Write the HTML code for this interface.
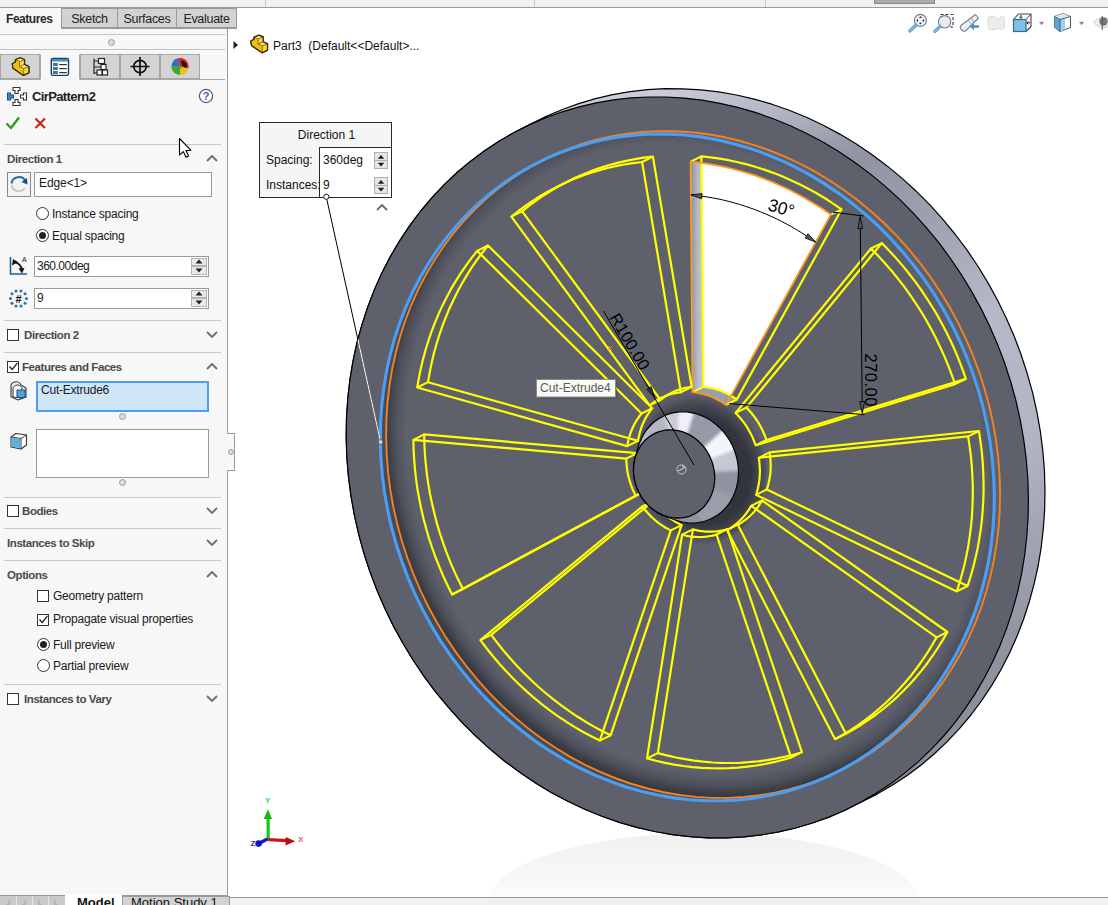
<!DOCTYPE html>
<html><head><meta charset="utf-8"><title>CirPattern2</title><style>
html,body{margin:0;padding:0;}
body{width:1108px;height:905px;overflow:hidden;background:#fff;position:relative;font-family:"Liberation Sans",sans-serif;font-size:12px;color:#1e1e1e;}
.abs{position:absolute;}
#topstrip{left:0;top:0;width:1108px;height:7px;background:#f0f0f0;border-bottom:1px solid #9a9a9a;}
#panel{left:0;top:8px;width:227px;height:887px;background:#f7f7f7;border-right:1px solid #9c9c9c;}
.tab{top:8px;height:20px;border:1px solid #9a9a9a;background:#d2d2d2;box-sizing:border-box;text-align:center;line-height:20px;font-size:12.5px;color:#222;letter-spacing:-0.3px;}
.tab.act{background:#f7f7f7;border-color:#f7f7f7;border-right-color:#9a9a9a;font-weight:bold;font-size:12px;letter-spacing:-0.45px;color:#2a2a2a;text-align:left;padding-left:5px;}
.hl{height:1px;background:#c9c9c9;left:4px;width:217px;}
.hl2{height:1px;background:#c4c4c4;left:0;width:225px;}
.itab{top:54px;height:25px;width:40px;box-sizing:border-box;border:1px solid #a8a8a8;background:#d4d4d4;}
.itab.act{background:#f7f7f7;border-color:#f7f7f7;border-left-color:#a8a8a8;border-right-color:#a8a8a8;height:26px;}
.sec{margin-top:1px;font-weight:bold;color:#4a4a4a;font-size:11.5px;letter-spacing:-0.42px;white-space:nowrap;}
.lbl{font-size:12px;color:#1a1a1a;white-space:nowrap;letter-spacing:-0.22px;}
.inp{background:#fff;border:1px solid #9a9a9a;box-sizing:border-box;}
.cb{width:12px;height:12px;margin-top:0.5px;box-sizing:border-box;border:1px solid #333;background:#fff;}
.rd{width:13px;height:13px;box-sizing:border-box;border:1px solid #333;background:#fff;border-radius:50%;}
.rd.on::after{content:"";position:absolute;left:2px;top:2px;width:7px;height:7px;border-radius:50%;background:#222;}
.hd{width:5px;height:5px;border:1px solid #9a9a9a;border-radius:50%;background:#dcdcdc;}
.spin{width:16px;border:1px solid #b5b5b5;background:#e9e9e9;box-sizing:border-box;}
</style></head><body>
<div id="topstrip" class="abs"></div>
<div class="abs" style="left:265px;top:0;width:1px;height:7px;background:#c8c8c8"></div>
<div class="abs" style="left:534px;top:0;width:1px;height:7px;background:#c8c8c8"></div>
<div class="abs" style="left:765px;top:0;width:1px;height:7px;background:#c8c8c8"></div>
<div class="abs" style="left:874px;top:0;width:61px;height:4px;background:#a9a9a9;border:1px solid #8a8a8a;border-top:none;box-sizing:border-box"></div>
<div id="panel" class="abs"></div>
<div class="abs tab act" style="left:0px;width:62px">Features</div>
<div class="abs tab" style="left:61px;width:57px">Sketch</div>
<div class="abs tab" style="left:117px;width:60px">Surfaces</div>
<div class="abs tab" style="left:176px;width:61px">Evaluate</div>
<div class="abs" style="left:61px;top:28px;width:176px;height:1px;background:#9a9a9a"></div>
<div class="abs hl2" style="top:34px"></div>
<div class="abs hd" style="left:108px;top:39px"></div>
<div class="abs hl2" style="top:49px"></div>
<div class="abs itab" style="left:0px"></div>
<div class="abs itab act" style="left:40px"></div>
<div class="abs itab" style="left:80px"></div>
<div class="abs itab" style="left:120px"></div>
<div class="abs itab" style="left:160px"></div>
<div class="abs" style="left:0;top:79px;width:40px;height:1px;background:#a8a8a8"></div>
<div class="abs" style="left:80px;top:79px;width:145px;height:1px;background:#a8a8a8"></div>
<svg class="abs" style="left:0;top:54px" width="228" height="26">
<!-- part icon -->
<g stroke-linejoin="round"><path d="M12.3,9.7 L15.5,7.9 L15.5,5.7 L20.2,3.8 L24.5,5.5 L24.5,10.4 L28.9,12.5 L28.9,18.7 L23.5,21.4 L12.9,14.1Z" fill="#f4c826" stroke="#3a2c05" stroke-width="1.3"/><path d="M15.5,5.7 L20.2,3.8 L24.5,5.5 L19.5,7.6Z" fill="#fde77a"/><path d="M19.5,7.6 L24.5,5.5 L24.5,10.4 L19.5,12.6Z" fill="#f9d848"/><path d="M24.5,10.4 L28.9,12.5 L23.8,14.4 L19.5,12.6Z" fill="#fde56e"/><path d="M23.8,14.4 L28.9,12.5 L28.9,18.7 L23.5,21.4Z" fill="#f8d440"/><path d="M12.3,9.7 L15.5,7.9 L19.5,10 L19.5,12.6 L23.8,14.4 L23.5,21.4 L12.9,14.1Z" fill="#f0be1c"/><path d="M15.5,5.7 L19.5,7.6 L24.5,5.5 M19.5,7.6 L19.5,12.6 L23.8,14.4 L28.9,12.5 M23.8,14.4 L23.5,21.4 M19.5,12.6 L24.5,10.4 M15.5,7.9 L15.5,5.7" fill="none" stroke="#7a5c08" stroke-width="0.8"/><path d="M12.3,9.7 L15.5,7.9 L15.5,5.7 L20.2,3.8 L24.5,5.5 L24.5,10.4 L28.9,12.5 L28.9,18.7 L23.5,21.4 L12.9,14.1Z" fill="none" stroke="#3a2c05" stroke-width="1.2"/></g>
<!-- property manager -->
<g><rect x="51.3" y="4.4" width="17.2" height="17" rx="1.6" fill="#fff" stroke="#1f3e5a" stroke-width="1.4"/><path d="M52,7.4 v-1.4 a1,1 0 0 1 1,-1 h13.8 a1,1 0 0 1 1,1 v1.4z" fill="#3f8fc4"/><rect x="53.3" y="9.4" width="4" height="2.3" fill="#2f7fb5" stroke="#1f4f7a" stroke-width="0.6"/><rect x="59.2" y="10" width="7.6" height="1.2" fill="#333"/><rect x="53.3" y="13.4" width="4" height="2.3" fill="#2f7fb5" stroke="#1f4f7a" stroke-width="0.6"/><rect x="59.2" y="14" width="7.6" height="1.2" fill="#333"/><rect x="53.3" y="17.4" width="4" height="2.3" fill="#2f7fb5" stroke="#1f4f7a" stroke-width="0.6"/><rect x="59.2" y="18" width="7.6" height="1.2" fill="#333"/></g>
<!-- config manager -->
<g transform="translate(92,3)" fill="#fff" stroke="#222" stroke-width="1.2"><path d="M2,1.5 L2,17 M2,4 L7,4 M2,10 L9,10 M2,16 L5,16" fill="none"/><rect x="6.5" y="1.5" width="6" height="5"/><rect x="9" y="7.5" width="5" height="5"/><rect x="5" y="13" width="5" height="5"/><rect x="10.5" y="13" width="5" height="5"/></g>
<!-- crosshair -->
<g transform="translate(140,12.5)" fill="none" stroke="#111" stroke-width="1.7"><circle r="6.2"/><path d="M-9.5,0 L9.5,0 M0,-9.5 L0,9.5"/></g>
<!-- appearance ball -->
<g transform="translate(180,12.5)"><circle r="8.5" fill="#e8b010"/><path d="M0,0 L-8.5,0 A8.5,8.5 0 0 1 -2,-8.3Z" fill="#2c6fd0"/><path d="M0,0 L-8.5,0 A8.5,8.5 0 0 0 0,8.5 L3,3Z" fill="#3aa935"/><path d="M0,0 L-2,-8.3 A8.5,8.5 0 0 1 8.4,1.5Z" fill="#d8232a"/><path d="M1,-6 A6,6 0 0 1 7,1 A5,7 0 0 1 1,-6Z" fill="#1a1a1a"/><path d="M0,8.5 A8.5,8.5 0 0 0 8.4,1.5 L0,2Z" fill="#f0c020"/></g>
</svg>
<svg class="abs" style="left:6px;top:86px" width="24" height="22"><g fill="#fff" stroke="#333" stroke-width="1.1"><path d="M7,1.5 h7 v3 h-2 v3 h-3 v-3 h-2z"/><path d="M7,19.5 h7 v-3 h-2 v-3 h-3 v3 h-2z"/><path d="M20.5,7 v7 h-3 v-2 h-3 v-3 h3 v-2z"/><path d="M1.5,7 v7 h3 v-2 h3 v-3 h-3 v-2z" fill="#3b8fd0" stroke="#1f4f7a"/></g></svg>
<div class="abs" style="left:32px;top:89px;font-weight:bold;font-size:13px;color:#222;letter-spacing:-0.62px;white-space:nowrap">CirPattern2</div>
<svg class="abs" style="left:198px;top:88px" width="16" height="16"><circle cx="8" cy="8" r="6.6" fill="#fff" stroke="#555b66" stroke-width="1.2"/><text x="8" y="12" text-anchor="middle" font-family="Liberation Sans,sans-serif" font-weight="bold" font-size="11" fill="#2f68a8">?</text></svg>
<svg class="abs" style="left:4px;top:114px" width="48" height="18"><path d="M2.5,9.5 L7,14 L15,3.5" fill="none" stroke="#2e9b1f" stroke-width="2.4"/><path d="M31.5,4.5 L41,14 M41,4.5 L31.5,14" fill="none" stroke="#c8280f" stroke-width="2.2"/></svg>
<div class="abs hl" style="top:144px"></div>
<div class="abs sec" style="left:7px;top:152px">Direction 1</div>
<svg class="abs" style="left:0;top:0" width="228" height="905"><path d="M207,161 l5,-5 l5,5" fill="none" stroke="#6e6e6e" stroke-width="1.8"/></svg>
<div class="abs inp" style="left:7px;top:172px;width:24px;height:25px;background:#f4f4f4;border-color:#8a8a8a"></div>
<svg class="abs" style="left:8px;top:173px" width="22" height="23"><path d="M3.5,12 A7.5,7.5 0 0 0 17,15" fill="none" stroke="#c9c9c9" stroke-width="2"/><path d="M3.5,10.5 A7.5,7.5 0 0 1 17.5,8" fill="none" stroke="#2c6f9e" stroke-width="2"/><path d="M19.5,11.5 L13.5,9 L19,5Z" fill="#1f4f7a"/></svg>
<div class="abs inp" style="left:34px;top:172px;width:178px;height:25px"></div>
<div class="abs lbl" style="left:39px;top:176px;letter-spacing:-0.1px">Edge&lt;1&gt;</div>
<div class="abs rd" style="left:36px;top:207px"></div>
<div class="abs lbl" style="left:52px;top:207px">Instance spacing</div>
<div class="abs rd on" style="left:36px;top:229px"></div>
<div class="abs lbl" style="left:52px;top:229px">Equal spacing</div>
<svg class="abs" style="left:8px;top:255px" width="22" height="22"><path d="M2.5,2 L2.5,19 L19,19" fill="none" stroke="#1f5f95" stroke-width="1.6"/><path d="M6,7 A9,9 0 0 1 14,15" fill="none" stroke="#111" stroke-width="1.8"/><path d="M4,10.5 L5,4 L10,7Z M16.5,13 L14,18.5 L10.5,13.5Z" fill="#111"/><text x="14" y="7" font-size="7" font-family="Liberation Sans,sans-serif" fill="#111">A</text></svg>
<div class="abs inp" style="left:34px;top:256px;width:175px;height:21px"></div>
<div class="abs lbl" style="left:37px;top:259px;letter-spacing:-0.5px">360.00deg</div>
<div class="abs spin" style="left:191px;top:258px;height:8px"></div><div class="abs spin" style="left:191px;top:266px;height:9px"></div><svg class="abs" style="left:191px;top:258px" width="16" height="17"><path d="M4.5,5.5 l3.5,-4 l3.5,4z M4.5,10.5 l3.5,4 l3.5,-4z" fill="#222"/></svg>
<svg class="abs" style="left:8px;top:288px" width="22" height="22"><g fill="#2a72a8"><circle cx="18.5" cy="10.5" r="1.5"/><circle cx="17.0" cy="15.2" r="1.5"/><circle cx="13.0" cy="18.1" r="1.5"/><circle cx="8.0" cy="18.1" r="1.5"/><circle cx="4.0" cy="15.2" r="1.5"/><circle cx="2.5" cy="10.5" r="1.5"/><circle cx="4.0" cy="5.8" r="1.5"/><circle cx="8.0" cy="2.9" r="1.5"/><circle cx="13.0" cy="2.9" r="1.5"/><circle cx="17.0" cy="5.8" r="1.5"/></g><text x="10.5" y="14.5" text-anchor="middle" font-size="11" font-weight="bold" font-family="Liberation Sans,sans-serif" fill="#111">#</text></svg>
<div class="abs inp" style="left:34px;top:288px;width:175px;height:21px"></div>
<div class="abs lbl" style="left:37px;top:291px">9</div>
<div class="abs spin" style="left:191px;top:290px;height:8px"></div><div class="abs spin" style="left:191px;top:298px;height:9px"></div><svg class="abs" style="left:191px;top:290px" width="16" height="17"><path d="M4.5,5.5 l3.5,-4 l3.5,4z M4.5,10.5 l3.5,4 l3.5,-4z" fill="#222"/></svg>
<div class="abs hl" style="top:320px"></div>
<div class="abs cb" style="left:7px;top:328px"></div>
<div class="abs sec" style="left:24px;top:328px">Direction 2</div>
<svg class="abs" style="left:0;top:0" width="228" height="905"><path d="M207,332 l5,5 l5,-5" fill="none" stroke="#6e6e6e" stroke-width="1.8"/></svg>
<div class="abs hl" style="top:352px"></div>
<div class="abs cb" style="left:7px;top:360px"></div><svg class="abs" style="left:7px;top:360px" width="13" height="13"><path d="M2.5,6.5 L5.2,9.5 L10.5,2.8" fill="none" stroke="#222" stroke-width="1.3"/></svg>
<div class="abs sec" style="left:22px;top:360px">Features and Faces</div>
<svg class="abs" style="left:0;top:0" width="228" height="905"><path d="M207,369 l5,-5 l5,5" fill="none" stroke="#6e6e6e" stroke-width="1.8"/></svg>
<svg class="abs" style="left:9px;top:381px" width="20" height="20"><path d="M2,6 A5,4 0 0 1 12,4 L17,7 L17,16 L9,19 L2,16Z" fill="#e8eef5" stroke="#333" stroke-width="1.1"/><path d="M4,8 A4.5,4 0 0 1 13,8 L13,17 L4,16Z" fill="#fff" stroke="#333" stroke-width="1"/><rect x="8" y="9" width="8" height="7.5" fill="#4aa3dc" stroke="#1f4f7a" stroke-width="1"/></svg>
<div class="abs" style="left:36px;top:381px;width:173px;height:31px;box-sizing:border-box;background:#cfe5f8;border:2px solid #4aa0ee"></div>
<div class="abs lbl" style="left:41px;top:383px">Cut-Extrude6</div>
<div class="abs hd" style="left:119px;top:413px"></div>
<svg class="abs" style="left:9px;top:431px" width="20" height="20"><path d="M2,6 L7,2.5 L17.5,4 L17.5,14 L12,18 L2,16Z" fill="#fff" stroke="#333" stroke-width="1.1" stroke-linejoin="round"/><path d="M2,6 L12,7.5 L12,18 M12,7.5 L17.5,4" fill="none" stroke="#333" stroke-width="1"/><path d="M2.6,6.6 L11.4,8 L11.4,17.2 L2.6,15.5Z" fill="#5ab0e0"/></svg>
<div class="abs inp" style="left:36px;top:429px;width:173px;height:49px"></div>
<div class="abs hd" style="left:119px;top:479px"></div>
<div class="abs hl" style="top:497px"></div>
<div class="abs cb" style="left:7px;top:504px"></div>
<div class="abs sec" style="left:22px;top:504px">Bodies</div>
<svg class="abs" style="left:0;top:0" width="228" height="905"><path d="M207,508 l5,5 l5,-5" fill="none" stroke="#6e6e6e" stroke-width="1.8"/></svg>
<div class="abs hl" style="top:528px"></div>
<div class="abs sec" style="left:7px;top:536px">Instances to Skip</div>
<svg class="abs" style="left:0;top:0" width="228" height="905"><path d="M207,540 l5,5 l5,-5" fill="none" stroke="#6e6e6e" stroke-width="1.8"/></svg>
<div class="abs hl" style="top:560px"></div>
<div class="abs sec" style="left:7px;top:568px">Options</div>
<svg class="abs" style="left:0;top:0" width="228" height="905"><path d="M207,577 l5,-5 l5,5" fill="none" stroke="#6e6e6e" stroke-width="1.8"/></svg>
<div class="abs cb" style="left:37px;top:589px"></div>
<div class="abs lbl" style="left:53px;top:589px">Geometry pattern</div>
<div class="abs cb" style="left:37px;top:613px"></div><svg class="abs" style="left:37px;top:613px" width="13" height="13"><path d="M2.5,6.5 L5.2,9.5 L10.5,2.8" fill="none" stroke="#222" stroke-width="1.3"/></svg>
<div class="abs lbl" style="left:53px;top:612px">Propagate visual properties</div>
<div class="abs rd on" style="left:37px;top:638px"></div>
<div class="abs lbl" style="left:53px;top:638px">Full preview</div>
<div class="abs rd" style="left:37px;top:659px"></div>
<div class="abs lbl" style="left:53px;top:659px">Partial preview</div>
<div class="abs hl" style="top:684px"></div>
<div class="abs cb" style="left:7px;top:692px"></div>
<div class="abs sec" style="left:24px;top:692px">Instances to Vary</div>
<svg class="abs" style="left:0;top:0" width="228" height="905"><path d="M207,696 l5,5 l5,-5" fill="none" stroke="#6e6e6e" stroke-width="1.8"/></svg>
<div class="abs" style="left:227px;top:433px;width:8px;height:38px;box-sizing:border-box;background:#f7f7f7;border:1px solid #9c9c9c;border-left:none"></div>
<div class="abs hd" style="left:228px;top:449px;width:4px;height:4px"></div>
<div class="abs" style="left:0;top:895px;width:228px;height:10px;background:#f0f0f0;border-top:1px solid #9a9a9a;box-sizing:border-box"></div>
<div class="abs" style="left:228px;top:897px;width:880px;height:8px;background:#f0f0f0;border-top:1px solid #9a9a9a;box-sizing:border-box"></div>
<div class="abs" style="left:0;top:896px;width:65px;height:9px;background:#c9c9c9"></div>
<div class="abs" style="left:16px;top:896px;width:1px;height:9px;background:#e6e6e6"></div>
<div class="abs" style="left:32px;top:896px;width:1px;height:9px;background:#e6e6e6"></div>
<div class="abs" style="left:48px;top:896px;width:1px;height:9px;background:#e6e6e6"></div>
<svg class="abs" style="left:0;top:896px" width="66" height="9"><path d="M10,3 l-4,6 h4z M26,3 l-4,6 h4z M38,3 l4,6 h-4z M54,3 l4,6 h-4z" fill="#b4b4b4"/></svg>
<div class="abs" style="left:65px;top:894px;width:57px;height:11px;background:#fff;overflow:hidden"><div style="position:absolute;left:12px;top:1px;font-weight:bold;font-size:13px;color:#111;white-space:nowrap">Model</div></div>
<div class="abs" style="left:122px;top:896px;width:108px;height:9px;background:#d2d2d2;border:1px solid #9a9a9a;border-bottom:none;box-sizing:border-box;overflow:hidden"><div style="position:absolute;left:8px;top:-2px;font-size:13px;color:#111;white-space:nowrap">Motion Study 1</div></div>
<svg class="abs" style="left:0;top:0" width="1108" height="905" viewBox="0 0 1108 905" font-family="Liberation Sans, sans-serif">
<clipPath id="vp"><rect x="228" y="8" width="880" height="889"/></clipPath>
<g clip-path="url(#vp)">
<defs>
<linearGradient id="rim" gradientUnits="userSpaceOnUse" x1="650" y1="92" x2="942" y2="782"><stop offset="0" stop-color="#c9ccd9"/><stop offset="0.09" stop-color="#b3b6c5"/><stop offset="0.185" stop-color="#9093a1"/><stop offset="0.3" stop-color="#9da0ae"/><stop offset="0.44" stop-color="#b5b8c8"/><stop offset="0.62" stop-color="#b2b5c4"/><stop offset="0.76" stop-color="#9fa2b0"/><stop offset="0.88" stop-color="#8f929f"/><stop offset="1" stop-color="#868996"/></linearGradient>
<linearGradient id="wallL" gradientUnits="userSpaceOnUse" x1="691" y1="0" x2="704" y2="0"><stop offset="0" stop-color="#8e919e"/><stop offset="0.5" stop-color="#b6b8c6"/><stop offset="1" stop-color="#c9cbd6"/></linearGradient>
<linearGradient id="floorsh" x1="0" y1="0" x2="0" y2="1"><stop offset="0" stop-color="#f0f0f0"/><stop offset="0.25" stop-color="#f6f6f6"/><stop offset="0.5" stop-color="#fdfdfd"/><stop offset="1" stop-color="#ffffff"/></linearGradient>
<radialGradient id="hubsh" gradientUnits="userSpaceOnUse" cx="0" cy="0" r="1" gradientTransform="matrix(73.34 6.49 -0.65 -79.40 700.64 469.62)"><stop offset="0" stop-color="#2f313a"/><stop offset="0.68" stop-color="#33353e"/><stop offset="0.85" stop-color="#4a4c57"/><stop offset="1" stop-color="#5e616c" stop-opacity="0"/></radialGradient>
<radialGradient id="recsh" gradientUnits="userSpaceOnUse" cx="0" cy="0" r="1" gradientTransform="matrix(316.20 28.00 -2.82 -342.34 696.10 458.52)"><stop offset="0.917" stop-color="#2c2e36" stop-opacity="0"/><stop offset="0.951" stop-color="#2c2e36" stop-opacity="0.3"/><stop offset="0.971" stop-color="#2c2e36" stop-opacity="0.62"/><stop offset="0.99" stop-color="#2c2e36" stop-opacity="0.85"/></radialGradient>
<linearGradient id="chrome" gradientUnits="userSpaceOnUse" x1="650" y1="410" x2="735" y2="525"><stop offset="0" stop-color="#9c9fae"/><stop offset="0.18" stop-color="#e8e9f0"/><stop offset="0.3" stop-color="#8a8d9b"/><stop offset="0.5" stop-color="#7b7e8c"/><stop offset="0.62" stop-color="#dfe0ea"/><stop offset="0.72" stop-color="#a5a8b6"/><stop offset="1" stop-color="#7d808e"/></linearGradient>
<clipPath id="seedclip"><path d="M726.0,404.9 L724.1,403.5 L722.1,402.3 L720.1,401.1 L718.1,400.0 L716.1,398.9 L714.0,397.9 L711.9,397.0 L709.8,396.2 L707.7,395.4 L705.5,394.8 L703.4,394.1 L701.2,393.6 L699.0,393.1 L696.9,392.8 L694.7,392.4 L692.5,392.2 L690.6,161.7 L699.8,162.7 L708.9,164.0 L718.0,165.6 L727.1,167.5 L736.2,169.8 L745.2,172.3 L754.2,175.2 L763.1,178.4 L771.9,181.9 L780.6,185.7 L789.3,189.8 L797.8,194.2 L806.3,198.9 L814.6,203.9 L822.7,209.1 L830.8,214.6Z"/></clipPath>
<clipPath id="blueclip"><path d="M994.3,494.6 L993.7,477.1 L992.3,459.7 L990.1,442.3 L987.0,424.9 L983.1,407.6 L978.4,390.5 L972.9,373.7 L966.6,357.0 L959.6,340.7 L951.8,324.8 L943.3,309.2 L934.1,294.0 L924.2,279.4 L913.6,265.2 L902.4,251.6 L890.7,238.6 L878.4,226.2 L865.5,214.5 L852.2,203.5 L838.4,193.1 L824.2,183.6 L809.7,174.8 L794.8,166.8 L779.6,159.7 L764.1,153.4 L748.5,147.9 L732.6,143.4 L716.7,139.7 L700.6,136.9 L684.6,135.0 L668.5,134.1 L652.5,134.0 L636.6,134.9 L620.8,136.6 L605.2,139.3 L589.8,142.9 L574.7,147.4 L559.9,152.7 L545.5,158.9 L531.4,166.0 L517.8,173.8 L504.6,182.5 L492.0,192.0 L479.9,202.2 L468.3,213.2 L457.3,224.8 L447.0,237.1 L437.3,250.0 L428.3,263.6 L420.1,277.7 L412.5,292.3 L405.7,307.4 L399.7,322.9 L394.5,338.8 L390.1,355.1 L386.4,371.7 L383.7,388.6 L381.7,405.6 L380.6,422.9 L380.3,440.2 L380.9,457.7 L382.3,475.1 L384.5,492.5 L387.6,509.9 L391.5,527.2 L396.2,544.3 L401.7,561.1 L408.0,577.8 L415.0,594.1 L422.8,610.0 L431.3,625.6 L440.5,640.8 L450.4,655.4 L461.0,669.6 L472.2,683.2 L483.9,696.2 L496.2,708.6 L509.1,720.3 L522.4,731.3 L536.2,741.7 L550.4,751.2 L564.9,760.0 L579.8,768.0 L595.0,775.1 L610.5,781.4 L626.1,786.9 L642.0,791.4 L657.9,795.1 L674.0,797.9 L690.0,799.8 L706.1,800.7 L722.1,800.8 L738.0,799.9 L753.8,798.2 L769.4,795.5 L784.8,791.9 L799.9,787.4 L814.7,782.1 L829.1,775.9 L843.2,768.8 L856.8,761.0 L870.0,752.3 L882.6,742.8 L894.7,732.6 L906.3,721.6 L917.3,710.0 L927.6,697.7 L937.3,684.8 L946.3,671.2 L954.5,657.1 L962.1,642.5 L968.9,627.4 L974.9,611.9 L980.1,596.0 L984.5,579.7 L988.2,563.1 L990.9,546.2 L992.9,529.2 L994.0,511.9 L994.3,494.6Z"/></clipPath>
<clipPath id="faceclip"><path d="M1028.4,497.6 L1027.8,478.2 L1026.2,458.8 L1023.7,439.5 L1020.3,420.2 L1016.0,401.0 L1010.8,382.0 L1004.7,363.2 L997.7,344.8 L989.8,326.6 L981.2,308.9 L971.7,291.6 L961.5,274.8 L950.5,258.5 L938.8,242.7 L926.3,227.6 L913.3,213.2 L899.6,199.4 L885.3,186.4 L870.5,174.1 L855.2,162.7 L839.4,152.1 L823.3,142.3 L806.7,133.5 L789.8,125.5 L772.6,118.5 L755.2,112.4 L737.7,107.4 L719.9,103.3 L702.1,100.2 L684.3,98.1 L666.4,97.0 L648.6,97.0 L630.9,97.9 L613.4,99.9 L596.1,102.9 L579.0,106.8 L562.2,111.8 L545.8,117.7 L529.7,124.6 L514.1,132.5 L499.0,141.2 L484.3,150.9 L470.3,161.4 L456.8,172.7 L444.0,184.9 L431.8,197.8 L420.3,211.5 L409.6,225.9 L399.6,240.9 L390.4,256.6 L382.0,272.8 L374.5,289.6 L367.8,306.9 L362.0,324.6 L357.0,342.6 L353.0,361.1 L349.9,379.8 L347.8,398.8 L346.5,417.9 L346.2,437.2 L346.8,456.6 L348.4,476.0 L350.9,495.3 L354.3,514.6 L358.6,533.8 L363.8,552.8 L369.9,571.6 L376.9,590.0 L384.8,608.2 L393.4,625.9 L402.9,643.2 L413.1,660.0 L424.1,676.3 L435.8,692.1 L448.3,707.2 L461.3,721.6 L475.0,735.4 L489.3,748.4 L504.1,760.7 L519.4,772.1 L535.2,782.7 L551.3,792.5 L567.9,801.3 L584.8,809.3 L602.0,816.3 L619.4,822.4 L636.9,827.4 L654.7,831.5 L672.5,834.6 L690.3,836.7 L708.2,837.8 L726.0,837.8 L743.7,836.9 L761.2,834.9 L778.5,831.9 L795.6,828.0 L812.4,823.0 L828.8,817.1 L844.9,810.2 L860.5,802.3 L875.6,793.6 L890.3,783.9 L904.3,773.4 L917.8,762.1 L930.6,749.9 L942.8,737.0 L954.3,723.3 L965.0,708.9 L975.0,693.9 L984.2,678.2 L992.6,662.0 L1000.1,645.2 L1006.8,627.9 L1012.6,610.2 L1017.6,592.2 L1021.6,573.7 L1024.7,555.0 L1026.8,536.0 L1028.1,516.9 L1028.4,497.6Z"/></clipPath>
</defs>
<ellipse cx="704" cy="903" rx="216" ry="70" fill="url(#floorsh)"/>
<path d="M1045.0,489.4 L1044.7,508.6 L1043.4,527.8 L1041.3,546.8 L1038.2,565.5 L1034.1,583.9 L1029.2,602.0 L1023.4,619.7 L1016.7,637.0 L1009.2,653.7 L1000.8,670.0 L991.6,685.6 L981.6,700.7 L970.9,715.0 L959.4,728.7 L947.2,741.6 L934.4,753.8 L920.9,765.2 L906.8,775.7 L892.2,785.3 L877.1,794.1 L861.4,801.9 L844.9,810.2 L828.8,817.1 L812.4,823.0 L795.6,828.0 L778.5,831.9 L761.2,834.9 L743.7,836.9 L726.0,837.8 L708.2,837.8 L690.3,836.7 L672.5,834.6 L654.7,831.5 L636.9,827.4 L619.4,822.4 L602.0,816.3 L584.8,809.3 L567.9,801.3 L551.3,792.5 L535.2,782.7 L519.4,772.1 L504.1,760.7 L489.3,748.4 L475.0,735.4 L461.3,721.6 L448.3,707.2 L435.8,692.1 L424.1,676.3 L413.1,660.0 L402.9,643.2 L393.4,625.9 L384.8,608.2 L376.9,590.0 L369.9,571.6 L363.8,552.8 L358.6,533.8 L354.3,514.6 L350.9,495.3 L348.4,476.0 L346.8,456.6 L346.2,437.2 L346.5,417.9 L347.8,398.8 L349.9,379.8 L353.0,361.1 L357.0,342.6 L362.0,324.6 L367.8,306.9 L374.5,289.6 L382.0,272.8 L390.4,256.6 L399.6,240.9 L409.6,225.9 L420.3,211.5 L431.8,197.8 L444.0,184.9 L456.8,172.7 L470.3,161.4 L484.3,150.9 L499.0,141.2 L514.1,132.5 L529.7,124.6 L546.3,116.4 L562.4,109.5 L578.8,103.6 L595.6,98.6 L612.7,94.6 L630.0,91.7 L647.5,89.7 L665.2,88.7 L683.0,88.8 L700.8,89.9 L718.7,91.9 L736.5,95.0 L754.2,99.1 L771.8,104.2 L789.2,110.3 L806.4,117.3 L823.3,125.2 L839.8,134.1 L856.0,143.8 L871.8,154.4 L887.1,165.9 L901.9,178.1 L916.2,191.2 L929.9,204.9 L942.9,219.4 L955.3,234.5 L967.1,250.2 L978.1,266.5 L988.3,283.4 L997.8,300.7 L1006.4,318.4 L1014.3,336.5 L1021.2,355.0 L1027.3,373.8 L1032.6,392.7 L1036.9,411.9 L1040.3,431.2 L1042.8,450.6 L1044.4,470.0Z" fill="url(#rim)" stroke="#000" stroke-width="1.2" stroke-linejoin="round"/>
<path d="M1028.4,497.6 L1027.8,478.2 L1026.2,458.8 L1023.7,439.5 L1020.3,420.2 L1016.0,401.0 L1010.8,382.0 L1004.7,363.2 L997.7,344.8 L989.8,326.6 L981.2,308.9 L971.7,291.6 L961.5,274.8 L950.5,258.5 L938.8,242.7 L926.3,227.6 L913.3,213.2 L899.6,199.4 L885.3,186.4 L870.5,174.1 L855.2,162.7 L839.4,152.1 L823.3,142.3 L806.7,133.5 L789.8,125.5 L772.6,118.5 L755.2,112.4 L737.7,107.4 L719.9,103.3 L702.1,100.2 L684.3,98.1 L666.4,97.0 L648.6,97.0 L630.9,97.9 L613.4,99.9 L596.1,102.9 L579.0,106.8 L562.2,111.8 L545.8,117.7 L529.7,124.6 L514.1,132.5 L499.0,141.2 L484.3,150.9 L470.3,161.4 L456.8,172.7 L444.0,184.9 L431.8,197.8 L420.3,211.5 L409.6,225.9 L399.6,240.9 L390.4,256.6 L382.0,272.8 L374.5,289.6 L367.8,306.9 L362.0,324.6 L357.0,342.6 L353.0,361.1 L349.9,379.8 L347.8,398.8 L346.5,417.9 L346.2,437.2 L346.8,456.6 L348.4,476.0 L350.9,495.3 L354.3,514.6 L358.6,533.8 L363.8,552.8 L369.9,571.6 L376.9,590.0 L384.8,608.2 L393.4,625.9 L402.9,643.2 L413.1,660.0 L424.1,676.3 L435.8,692.1 L448.3,707.2 L461.3,721.6 L475.0,735.4 L489.3,748.4 L504.1,760.7 L519.4,772.1 L535.2,782.7 L551.3,792.5 L567.9,801.3 L584.8,809.3 L602.0,816.3 L619.4,822.4 L636.9,827.4 L654.7,831.5 L672.5,834.6 L690.3,836.7 L708.2,837.8 L726.0,837.8 L743.7,836.9 L761.2,834.9 L778.5,831.9 L795.6,828.0 L812.4,823.0 L828.8,817.1 L844.9,810.2 L860.5,802.3 L875.6,793.6 L890.3,783.9 L904.3,773.4 L917.8,762.1 L930.6,749.9 L942.8,737.0 L954.3,723.3 L965.0,708.9 L975.0,693.9 L984.2,678.2 L992.6,662.0 L1000.1,645.2 L1006.8,627.9 L1012.6,610.2 L1017.6,592.2 L1021.6,573.7 L1024.7,555.0 L1026.8,536.0 L1028.1,516.9 L1028.4,497.6Z" fill="#5e616c" stroke="#000" stroke-width="1.2"/>
<g clip-path="url(#blueclip)">
<path d="M994.3,494.6 L993.7,477.1 L992.3,459.7 L990.1,442.3 L987.0,424.9 L983.1,407.6 L978.4,390.5 L972.9,373.7 L966.6,357.0 L959.6,340.7 L951.8,324.8 L943.3,309.2 L934.1,294.0 L924.2,279.4 L913.6,265.2 L902.4,251.6 L890.7,238.6 L878.4,226.2 L865.5,214.5 L852.2,203.5 L838.4,193.1 L824.2,183.6 L809.7,174.8 L794.8,166.8 L779.6,159.7 L764.1,153.4 L748.5,147.9 L732.6,143.4 L716.7,139.7 L700.6,136.9 L684.6,135.0 L668.5,134.1 L652.5,134.0 L636.6,134.9 L620.8,136.6 L605.2,139.3 L589.8,142.9 L574.7,147.4 L559.9,152.7 L545.5,158.9 L531.4,166.0 L517.8,173.8 L504.6,182.5 L492.0,192.0 L479.9,202.2 L468.3,213.2 L457.3,224.8 L447.0,237.1 L437.3,250.0 L428.3,263.6 L420.1,277.7 L412.5,292.3 L405.7,307.4 L399.7,322.9 L394.5,338.8 L390.1,355.1 L386.4,371.7 L383.7,388.6 L381.7,405.6 L380.6,422.9 L380.3,440.2 L380.9,457.7 L382.3,475.1 L384.5,492.5 L387.6,509.9 L391.5,527.2 L396.2,544.3 L401.7,561.1 L408.0,577.8 L415.0,594.1 L422.8,610.0 L431.3,625.6 L440.5,640.8 L450.4,655.4 L461.0,669.6 L472.2,683.2 L483.9,696.2 L496.2,708.6 L509.1,720.3 L522.4,731.3 L536.2,741.7 L550.4,751.2 L564.9,760.0 L579.8,768.0 L595.0,775.1 L610.5,781.4 L626.1,786.9 L642.0,791.4 L657.9,795.1 L674.0,797.9 L690.0,799.8 L706.1,800.7 L722.1,800.8 L738.0,799.9 L753.8,798.2 L769.4,795.5 L784.8,791.9 L799.9,787.4 L814.7,782.1 L829.1,775.9 L843.2,768.8 L856.8,761.0 L870.0,752.3 L882.6,742.8 L894.7,732.6 L906.3,721.6 L917.3,710.0 L927.6,697.7 L937.3,684.8 L946.3,671.2 L954.5,657.1 L962.1,642.5 L968.9,627.4 L974.9,611.9 L980.1,596.0 L984.5,579.7 L988.2,563.1 L990.9,546.2 L992.9,529.2 L994.0,511.9 L994.3,494.6Z" fill="#494b55"/>
<path d="M1000.1,491.7 L999.5,474.3 L998.1,456.8 L995.9,439.4 L992.8,422.0 L988.9,404.8 L984.2,387.7 L978.7,370.8 L972.4,354.2 L965.4,337.8 L957.6,321.9 L949.1,306.3 L939.8,291.1 L930.0,276.5 L919.4,262.3 L908.2,248.7 L896.5,235.7 L884.2,223.3 L871.3,211.6 L858.0,200.6 L844.2,190.3 L830.0,180.7 L815.5,171.9 L800.6,164.0 L785.4,156.8 L769.9,150.5 L754.2,145.1 L738.4,140.5 L722.5,136.8 L706.4,134.0 L690.4,132.1 L674.3,131.2 L658.3,131.1 L642.4,132.0 L626.6,133.8 L611.0,136.4 L595.6,140.0 L580.5,144.5 L565.7,149.8 L551.3,156.0 L537.2,163.1 L523.6,171.0 L510.4,179.7 L497.8,189.1 L485.6,199.3 L474.1,210.3 L463.1,221.9 L452.8,234.2 L443.1,247.2 L434.1,260.7 L425.9,274.8 L418.3,289.4 L411.5,304.5 L405.5,320.0 L400.3,336.0 L395.9,352.2 L392.2,368.8 L389.5,385.7 L387.5,402.7 L386.4,420.0 L386.1,437.3 L386.7,454.8 L388.1,472.2 L390.3,489.7 L393.4,507.0 L397.3,524.3 L402.0,541.4 L407.5,558.3 L413.8,574.9 L420.8,591.2 L428.6,607.2 L437.1,622.7 L446.3,637.9 L456.2,652.6 L466.8,666.7 L478.0,680.3 L489.7,693.3 L502.0,705.7 L514.9,717.4 L528.2,728.5 L542.0,738.8 L556.2,748.3 L570.7,757.1 L585.6,765.1 L600.8,772.2 L616.3,778.5 L631.9,784.0 L647.8,788.5 L663.7,792.2 L679.8,795.0 L695.8,796.9 L711.9,797.9 L727.9,797.9 L743.8,797.0 L759.6,795.3 L775.2,792.6 L790.6,789.0 L805.7,784.6 L820.5,779.2 L834.9,773.0 L849.0,766.0 L862.6,758.1 L875.8,749.4 L888.4,739.9 L900.5,729.7 L912.1,718.8 L923.1,707.1 L933.4,694.8 L943.1,681.9 L952.0,668.3 L960.3,654.2 L967.9,639.6 L974.7,624.5 L980.7,609.0 L985.9,593.1 L990.3,576.8 L993.9,560.2 L996.7,543.4 L998.7,526.3 L999.8,509.1 L1000.1,491.7Z" fill="#5e616c"/>
<path d="M1000.1,491.7 L999.5,474.3 L998.1,456.8 L995.9,439.4 L992.8,422.0 L988.9,404.8 L984.2,387.7 L978.7,370.8 L972.4,354.2 L965.4,337.8 L957.6,321.9 L949.1,306.3 L939.8,291.1 L930.0,276.5 L919.4,262.3 L908.2,248.7 L896.5,235.7 L884.2,223.3 L871.3,211.6 L858.0,200.6 L844.2,190.3 L830.0,180.7 L815.5,171.9 L800.6,164.0 L785.4,156.8 L769.9,150.5 L754.2,145.1 L738.4,140.5 L722.5,136.8 L706.4,134.0 L690.4,132.1 L674.3,131.2 L658.3,131.1 L642.4,132.0 L626.6,133.8 L611.0,136.4 L595.6,140.0 L580.5,144.5 L565.7,149.8 L551.3,156.0 L537.2,163.1 L523.6,171.0 L510.4,179.7 L497.8,189.1 L485.6,199.3 L474.1,210.3 L463.1,221.9 L452.8,234.2 L443.1,247.2 L434.1,260.7 L425.9,274.8 L418.3,289.4 L411.5,304.5 L405.5,320.0 L400.3,336.0 L395.9,352.2 L392.2,368.8 L389.5,385.7 L387.5,402.7 L386.4,420.0 L386.1,437.3 L386.7,454.8 L388.1,472.2 L390.3,489.7 L393.4,507.0 L397.3,524.3 L402.0,541.4 L407.5,558.3 L413.8,574.9 L420.8,591.2 L428.6,607.2 L437.1,622.7 L446.3,637.9 L456.2,652.6 L466.8,666.7 L478.0,680.3 L489.7,693.3 L502.0,705.7 L514.9,717.4 L528.2,728.5 L542.0,738.8 L556.2,748.3 L570.7,757.1 L585.6,765.1 L600.8,772.2 L616.3,778.5 L631.9,784.0 L647.8,788.5 L663.7,792.2 L679.8,795.0 L695.8,796.9 L711.9,797.9 L727.9,797.9 L743.8,797.0 L759.6,795.3 L775.2,792.6 L790.6,789.0 L805.7,784.6 L820.5,779.2 L834.9,773.0 L849.0,766.0 L862.6,758.1 L875.8,749.4 L888.4,739.9 L900.5,729.7 L912.1,718.8 L923.1,707.1 L933.4,694.8 L943.1,681.9 L952.0,668.3 L960.3,654.2 L967.9,639.6 L974.7,624.5 L980.7,609.0 L985.9,593.1 L990.3,576.8 L993.9,560.2 L996.7,543.4 L998.7,526.3 L999.8,509.1 L1000.1,491.7Z" fill="url(#recsh)"/>
</g>
<path d="M1000.1,491.7 L999.5,474.3 L998.1,456.8 L995.9,439.4 L992.8,422.0 L988.9,404.8 L984.2,387.7 L978.7,370.8 L972.4,354.2 L965.4,337.8 L957.6,321.9 L949.1,306.3 L939.8,291.1 L930.0,276.5 L919.4,262.3 L908.2,248.7 L896.5,235.7 L884.2,223.3 L871.3,211.6 L858.0,200.6 L844.2,190.3 L830.0,180.7 L815.5,171.9 L800.6,164.0 L785.4,156.8 L769.9,150.5 L754.2,145.1 L738.4,140.5 L722.5,136.8 L706.4,134.0 L690.4,132.1 L674.3,131.2 L658.3,131.1 L642.4,132.0 L626.6,133.8 L611.0,136.4 L595.6,140.0 L580.5,144.5 L565.7,149.8 L551.3,156.0 L537.2,163.1 L523.6,171.0 L510.4,179.7 L497.8,189.1 L485.6,199.3 L474.1,210.3 L463.1,221.9 L452.8,234.2 L443.1,247.2 L434.1,260.7 L425.9,274.8 L418.3,289.4 L411.5,304.5 L405.5,320.0 L400.3,336.0 L395.9,352.2 L392.2,368.8 L389.5,385.7 L387.5,402.7 L386.4,420.0 L386.1,437.3 L386.7,454.8 L388.1,472.2 L390.3,489.7 L393.4,507.0 L397.3,524.3 L402.0,541.4 L407.5,558.3 L413.8,574.9 L420.8,591.2 L428.6,607.2 L437.1,622.7 L446.3,637.9 L456.2,652.6 L466.8,666.7 L478.0,680.3 L489.7,693.3 L502.0,705.7 L514.9,717.4 L528.2,728.5 L542.0,738.8 L556.2,748.3 L570.7,757.1 L585.6,765.1 L600.8,772.2 L616.3,778.5 L631.9,784.0 L647.8,788.5 L663.7,792.2 L679.8,795.0 L695.8,796.9 L711.9,797.9 L727.9,797.9 L743.8,797.0 L759.6,795.3 L775.2,792.6 L790.6,789.0 L805.7,784.6 L820.5,779.2 L834.9,773.0 L849.0,766.0 L862.6,758.1 L875.8,749.4 L888.4,739.9 L900.5,729.7 L912.1,718.8 L923.1,707.1 L933.4,694.8 L943.1,681.9 L952.0,668.3 L960.3,654.2 L967.9,639.6 L974.7,624.5 L980.7,609.0 L985.9,593.1 L990.3,576.8 L993.9,560.2 L996.7,543.4 L998.7,526.3 L999.8,509.1 L1000.1,491.7Z" fill="none" stroke="#f58220" stroke-width="1.9"/>
<path d="M994.3,494.6 L993.7,477.1 L992.3,459.7 L990.1,442.3 L987.0,424.9 L983.1,407.6 L978.4,390.5 L972.9,373.7 L966.6,357.0 L959.6,340.7 L951.8,324.8 L943.3,309.2 L934.1,294.0 L924.2,279.4 L913.6,265.2 L902.4,251.6 L890.7,238.6 L878.4,226.2 L865.5,214.5 L852.2,203.5 L838.4,193.1 L824.2,183.6 L809.7,174.8 L794.8,166.8 L779.6,159.7 L764.1,153.4 L748.5,147.9 L732.6,143.4 L716.7,139.7 L700.6,136.9 L684.6,135.0 L668.5,134.1 L652.5,134.0 L636.6,134.9 L620.8,136.6 L605.2,139.3 L589.8,142.9 L574.7,147.4 L559.9,152.7 L545.5,158.9 L531.4,166.0 L517.8,173.8 L504.6,182.5 L492.0,192.0 L479.9,202.2 L468.3,213.2 L457.3,224.8 L447.0,237.1 L437.3,250.0 L428.3,263.6 L420.1,277.7 L412.5,292.3 L405.7,307.4 L399.7,322.9 L394.5,338.8 L390.1,355.1 L386.4,371.7 L383.7,388.6 L381.7,405.6 L380.6,422.9 L380.3,440.2 L380.9,457.7 L382.3,475.1 L384.5,492.5 L387.6,509.9 L391.5,527.2 L396.2,544.3 L401.7,561.1 L408.0,577.8 L415.0,594.1 L422.8,610.0 L431.3,625.6 L440.5,640.8 L450.4,655.4 L461.0,669.6 L472.2,683.2 L483.9,696.2 L496.2,708.6 L509.1,720.3 L522.4,731.3 L536.2,741.7 L550.4,751.2 L564.9,760.0 L579.8,768.0 L595.0,775.1 L610.5,781.4 L626.1,786.9 L642.0,791.4 L657.9,795.1 L674.0,797.9 L690.0,799.8 L706.1,800.7 L722.1,800.8 L738.0,799.9 L753.8,798.2 L769.4,795.5 L784.8,791.9 L799.9,787.4 L814.7,782.1 L829.1,775.9 L843.2,768.8 L856.8,761.0 L870.0,752.3 L882.6,742.8 L894.7,732.6 L906.3,721.6 L917.3,710.0 L927.6,697.7 L937.3,684.8 L946.3,671.2 L954.5,657.1 L962.1,642.5 L968.9,627.4 L974.9,611.9 L980.1,596.0 L984.5,579.7 L988.2,563.1 L990.9,546.2 L992.9,529.2 L994.0,511.9 L994.3,494.6Z" fill="none" stroke="#4a9ff5" stroke-width="3.1"/>
<path d="M766.4,471.0 L766.3,466.8 L766.0,462.7 L765.4,458.5 L764.7,454.4 L763.8,450.2 L762.6,446.2 L761.3,442.1 L759.8,438.2 L758.1,434.3 L756.3,430.4 L754.2,426.7 L752.0,423.1 L749.7,419.6 L747.2,416.2 L744.5,413.0 L741.7,409.9 L738.7,406.9 L735.7,404.1 L732.5,401.5 L729.2,399.0 L725.8,396.7 L722.3,394.6 L718.8,392.7 L715.1,391.0 L711.4,389.5 L707.7,388.2 L703.9,387.1 L700.1,386.2 L696.3,385.6 L692.4,385.1 L688.6,384.9 L684.8,384.9 L681.0,385.1 L677.2,385.5 L673.5,386.1 L669.8,387.0 L666.2,388.1 L662.7,389.3 L659.2,390.8 L655.9,392.5 L652.6,394.4 L649.5,396.5 L646.4,398.7 L643.5,401.2 L640.8,403.8 L638.2,406.6 L635.7,409.5 L633.4,412.6 L631.2,415.8 L629.3,419.2 L627.5,422.7 L625.8,426.3 L624.4,430.0 L623.1,433.8 L622.1,437.7 L621.2,441.7 L620.6,445.7 L620.1,449.8 L619.8,453.9 L619.8,458.0 L619.9,462.2 L620.2,466.4 L620.8,470.5 L621.5,474.7 L622.4,478.8 L623.6,482.9 L624.9,486.9 L626.4,490.9 L628.0,494.8 L629.9,498.6 L631.9,502.3 L634.1,505.9 L636.5,509.4 L639.0,512.8 L641.7,516.1 L644.5,519.2 L647.5,522.1 L650.5,524.9 L653.7,527.6 L657.0,530.0 L660.4,532.3 L663.9,534.4 L667.4,536.3 L671.1,538.0 L674.7,539.5 L678.5,540.8 L682.3,541.9 L686.1,542.8 L689.9,543.5 L693.7,543.9 L697.6,544.2 L701.4,544.2 L705.2,544.0 L709.0,543.5 L712.7,542.9 L716.4,542.0 L720.0,541.0 L723.5,539.7 L727.0,538.2 L730.3,536.5 L733.6,534.6 L736.7,532.6 L739.8,530.3 L742.7,527.9 L745.4,525.3 L748.0,522.5 L750.5,519.5 L752.8,516.4 L755.0,513.2 L756.9,509.8 L758.7,506.4 L760.4,502.7 L761.8,499.0 L763.0,495.2 L764.1,491.3 L765.0,487.4 L765.6,483.4 L766.1,479.3 L766.4,475.2 L766.4,471.0Z" fill="url(#hubsh)"/>
<path d="M726.0,404.9 L724.1,403.5 L722.1,402.3 L720.1,401.1 L718.1,400.0 L716.1,398.9 L714.0,397.9 L711.9,397.0 L709.8,396.2 L707.7,395.4 L705.5,394.8 L703.4,394.1 L701.2,393.6 L699.0,393.1 L696.9,392.8 L694.7,392.4 L692.5,392.2 L690.6,161.7 L699.8,162.7 L708.9,164.0 L718.0,165.6 L727.1,167.5 L736.2,169.8 L745.2,172.3 L754.2,175.2 L763.1,178.4 L771.9,181.9 L780.6,185.7 L789.3,189.8 L797.8,194.2 L806.3,198.9 L814.6,203.9 L822.7,209.1 L830.8,214.6Z" fill="url(#wallL)"/>
<path d="M726.0,404.9 L724.1,403.5 L722.1,402.3 L720.1,401.1 L718.1,400.0 L716.1,398.9 L714.0,397.9 L711.9,397.0 L709.8,396.2 L707.7,395.4 L705.5,394.8 L703.4,394.1 L701.2,393.6 L699.0,393.1 L696.9,392.8 L694.7,392.4 L692.5,392.2 L703.3,386.9 L705.5,387.1 L707.7,387.4 L709.8,387.8 L712.0,388.2 L714.2,388.8 L716.3,389.4 L718.5,390.1 L720.6,390.8 L722.7,391.7 L724.8,392.6 L726.9,393.6 L728.9,394.6 L730.9,395.7 L732.9,396.9 L734.8,398.2 L736.8,399.5Z" fill="#9a9dab"/>
<path d="M736.8,399.5 L734.8,398.2 L732.9,396.9 L730.9,395.7 L728.9,394.6 L726.9,393.6 L724.8,392.6 L722.7,391.7 L720.6,390.8 L718.5,390.1 L716.3,389.4 L714.2,388.8 L712.0,388.2 L709.8,387.8 L707.7,387.4 L705.5,387.1 L703.3,386.9 L701.4,156.3 L710.5,157.3 L719.7,158.6 L728.8,160.2 L737.9,162.2 L747.0,164.4 L756.0,167.0 L765.0,169.9 L773.9,173.1 L782.7,176.6 L791.4,180.4 L800.1,184.5 L808.6,188.9 L817.0,193.5 L825.4,198.5 L833.5,203.8 L841.6,209.3Z" fill="#ffffff" clip-path="url(#seedclip)"/>
<path d="M736.8,399.5 L734.8,398.2 L732.9,396.9 L730.9,395.7 L728.9,394.6 L726.9,393.6 L724.8,392.6 L722.7,391.7 L720.6,390.8 L718.5,390.1 L716.3,389.4 L714.2,388.8 L712.0,388.2 L709.8,387.8 L707.7,387.4 L705.5,387.1 L703.3,386.9 L701.4,156.3 L710.5,157.3 L719.7,158.6 L728.8,160.2 L737.9,162.2 L747.0,164.4 L756.0,167.0 L765.0,169.9 L773.9,173.1 L782.7,176.6 L791.4,180.4 L800.1,184.5 L808.6,188.9 L817.0,193.5 L825.4,198.5 L833.5,203.8 L841.6,209.3Z" fill="none" stroke="#ffff00" stroke-width="2.2" stroke-linejoin="round"/>
<path d="M726.0,404.9 L736.8,399.5" stroke="#ffff00" stroke-width="2"/>
<path d="M692.5,392.2 L703.3,386.9" stroke="#ffff00" stroke-width="2"/>
<path d="M830.8,214.6 L841.6,209.3" stroke="#ffff00" stroke-width="2"/>
<path d="M690.6,161.7 L701.4,156.3" stroke="#ffff00" stroke-width="2"/>
<path d="M726.0,404.9 L724.1,403.5 L722.1,402.3 L720.1,401.1 L718.1,400.0 L716.1,398.9 L714.0,397.9 L711.9,397.0 L709.8,396.2 L707.7,395.4 L705.5,394.8 L703.4,394.1 L701.2,393.6 L699.0,393.1 L696.9,392.8 L694.7,392.4 L692.5,392.2 L690.6,161.7 L699.8,162.7 L708.9,164.0 L718.0,165.6 L727.1,167.5 L736.2,169.8 L745.2,172.3 L754.2,175.2 L763.1,178.4 L771.9,181.9 L780.6,185.7 L789.3,189.8 L797.8,194.2 L806.3,198.9 L814.6,203.9 L822.7,209.1 L830.8,214.6Z" fill="none" stroke="#ff9a1e" stroke-width="1.8" stroke-linejoin="round"/>
<path d="M680.9,392.3 L678.8,392.5 L676.6,392.9 L674.5,393.3 L672.4,393.8 L670.4,394.3 L668.3,395.0 L666.3,395.7 L664.3,396.5 L662.4,397.3 L660.5,398.3 L658.6,399.3 L656.7,400.4 L654.9,401.5 L653.1,402.7 L651.4,404.0 L649.7,405.3 L511.4,216.6 L518.5,211.0 L525.7,205.7 L533.1,200.6 L540.7,195.8 L548.5,191.3 L556.4,187.1 L564.4,183.2 L572.6,179.6 L581.0,176.3 L589.4,173.3 L598.0,170.6 L606.6,168.3 L615.4,166.2 L624.2,164.5 L633.1,163.1 L642.1,162.0Z" fill="none" stroke="#ffff00" stroke-width="2.2" stroke-linejoin="round"/>
<path d="M691.7,386.9 L689.6,387.2 L687.4,387.5 L685.3,387.9 L683.2,388.4 L681.2,389.0 L679.1,389.6 L677.1,390.3 L675.1,391.1 L673.2,392.0 L671.2,392.9 L669.3,393.9 L667.5,395.0 L665.7,396.1 L663.9,397.4 L662.2,398.6 L660.5,400.0 L522.2,211.3 L529.2,205.6 L536.5,200.3 L543.9,195.2 L551.5,190.5 L559.3,186.0 L567.2,181.8 L575.2,177.8 L583.4,174.2 L591.7,170.9 L600.2,167.9 L608.7,165.3 L617.4,162.9 L626.1,160.9 L635.0,159.1 L643.9,157.7 L652.9,156.6Z" fill="none" stroke="#ffff00" stroke-width="2.2" stroke-linejoin="round"/>
<path d="M680.9,392.3 L691.7,386.9" stroke="#ffff00" stroke-width="2"/>
<path d="M649.7,405.3 L660.5,400.0" stroke="#ffff00" stroke-width="2"/>
<path d="M642.1,162.0 L652.9,156.6" stroke="#ffff00" stroke-width="2"/>
<path d="M511.4,216.6 L522.2,211.3" stroke="#ffff00" stroke-width="2"/>
<path d="M641.6,413.5 L640.2,415.2 L638.9,417.0 L637.6,418.8 L636.4,420.7 L635.3,422.6 L634.3,424.6 L633.3,426.6 L632.3,428.6 L631.4,430.7 L630.6,432.8 L629.9,435.0 L629.2,437.1 L628.6,439.3 L628.1,441.6 L627.6,443.9 L627.2,446.1 L417.2,387.5 L418.9,378.0 L420.8,368.5 L423.1,359.1 L425.6,349.8 L428.4,340.7 L431.5,331.7 L434.9,322.8 L438.5,314.1 L442.5,305.5 L446.7,297.2 L451.1,288.9 L455.9,280.9 L460.8,273.1 L466.1,265.5 L471.5,258.1 L477.2,250.9Z" fill="none" stroke="#ffff00" stroke-width="2.2" stroke-linejoin="round"/>
<path d="M652.3,408.2 L651.0,409.9 L649.7,411.6 L648.4,413.5 L647.2,415.3 L646.1,417.2 L645.0,419.2 L644.0,421.2 L643.1,423.2 L642.2,425.3 L641.4,427.4 L640.7,429.6 L640.0,431.8 L639.4,434.0 L638.9,436.2 L638.4,438.5 L638.0,440.8 L428.0,382.2 L429.7,372.6 L431.6,363.1 L433.8,353.7 L436.4,344.5 L439.2,335.3 L442.3,326.3 L445.7,317.5 L449.3,308.7 L453.3,300.2 L457.5,291.8 L461.9,283.6 L466.6,275.6 L471.6,267.7 L476.8,260.1 L482.3,252.7 L488.0,245.5Z" fill="none" stroke="#ffff00" stroke-width="2.2" stroke-linejoin="round"/>
<path d="M641.6,413.5 L652.3,408.2" stroke="#ffff00" stroke-width="2"/>
<path d="M627.2,446.1 L638.0,440.8" stroke="#ffff00" stroke-width="2"/>
<path d="M477.2,250.9 L488.0,245.5" stroke="#ffff00" stroke-width="2"/>
<path d="M417.2,387.5 L428.0,382.2" stroke="#ffff00" stroke-width="2"/>
<path d="M626.3,458.6 L626.4,461.0 L626.5,463.3 L626.7,465.7 L627.0,468.1 L627.3,470.5 L627.7,472.8 L628.2,475.2 L628.7,477.5 L629.4,479.9 L630.0,482.2 L630.8,484.5 L631.6,486.7 L632.5,489.0 L633.5,491.2 L634.5,493.4 L635.6,495.6 L452.1,594.5 L447.6,585.4 L443.3,576.2 L439.4,566.9 L435.6,557.5 L432.2,548.0 L429.0,538.4 L426.2,528.7 L423.6,519.0 L421.3,509.2 L419.3,499.3 L417.5,489.4 L416.1,479.5 L415.0,469.6 L414.2,459.6 L413.6,449.7 L413.4,439.8Z" fill="none" stroke="#ffff00" stroke-width="2.2" stroke-linejoin="round"/>
<path d="M637.1,453.2 L637.2,455.6 L637.3,458.0 L637.5,460.4 L637.7,462.7 L638.1,465.1 L638.5,467.5 L639.0,469.8 L639.5,472.2 L640.1,474.5 L640.8,476.8 L641.6,479.1 L642.4,481.4 L643.3,483.6 L644.2,485.8 L645.3,488.0 L646.3,490.2 L462.9,589.1 L458.4,580.1 L454.1,570.9 L450.1,561.6 L446.4,552.2 L443.0,542.7 L439.8,533.1 L436.9,523.4 L434.4,513.6 L432.1,503.8 L430.0,494.0 L428.3,484.1 L426.9,474.1 L425.8,464.2 L424.9,454.3 L424.4,444.3 L424.2,434.4Z" fill="none" stroke="#ffff00" stroke-width="2.2" stroke-linejoin="round"/>
<path d="M626.3,458.6 L637.1,453.2" stroke="#ffff00" stroke-width="2"/>
<path d="M635.6,495.6 L646.3,490.2" stroke="#ffff00" stroke-width="2"/>
<path d="M413.4,439.8 L424.2,434.4" stroke="#ffff00" stroke-width="2"/>
<path d="M452.1,594.5 L462.9,589.1" stroke="#ffff00" stroke-width="2"/>
<path d="M642.3,506.5 L643.8,508.4 L645.3,510.3 L646.8,512.1 L648.4,513.8 L650.1,515.6 L651.8,517.2 L653.5,518.8 L655.3,520.4 L657.1,521.8 L659.0,523.3 L660.9,524.6 L662.8,525.9 L664.7,527.2 L666.7,528.3 L668.8,529.4 L670.8,530.4 L599.8,740.6 L591.2,736.3 L582.7,731.7 L574.4,726.9 L566.2,721.7 L558.1,716.3 L550.1,710.6 L542.3,704.6 L534.7,698.4 L527.2,691.9 L520.0,685.2 L512.9,678.2 L506.0,671.1 L499.3,663.7 L492.8,656.0 L486.5,648.2 L480.4,640.2Z" fill="none" stroke="#ffff00" stroke-width="2.2" stroke-linejoin="round"/>
<path d="M653.1,501.1 L654.6,503.0 L656.0,504.9 L657.6,506.7 L659.2,508.5 L660.8,510.2 L662.5,511.9 L664.3,513.5 L666.1,515.0 L667.9,516.5 L669.7,517.9 L671.6,519.3 L673.6,520.6 L675.5,521.8 L677.5,523.0 L679.6,524.1 L681.6,525.1 L610.6,735.3 L602.0,731.0 L593.5,726.4 L585.2,721.5 L576.9,716.3 L568.9,710.9 L560.9,705.2 L553.1,699.2 L545.5,693.0 L538.0,686.5 L530.8,679.8 L523.7,672.9 L516.8,665.7 L510.1,658.3 L503.6,650.7 L497.3,642.9 L491.2,634.8Z" fill="none" stroke="#ffff00" stroke-width="2.2" stroke-linejoin="round"/>
<path d="M642.3,506.5 L653.1,501.1" stroke="#ffff00" stroke-width="2"/>
<path d="M670.8,530.4 L681.6,525.1" stroke="#ffff00" stroke-width="2"/>
<path d="M480.4,640.2 L491.2,634.8" stroke="#ffff00" stroke-width="2"/>
<path d="M599.8,740.6 L610.6,735.3" stroke="#ffff00" stroke-width="2"/>
<path d="M682.1,534.7 L684.2,535.3 L686.4,535.8 L688.6,536.2 L690.8,536.5 L693.0,536.8 L695.1,536.9 L697.3,537.0 L699.5,537.1 L701.7,537.0 L703.8,536.9 L706.0,536.7 L708.1,536.4 L710.3,536.0 L712.4,535.6 L714.4,535.1 L716.5,534.5 L791.1,757.6 L782.5,760.0 L773.8,762.2 L765.0,764.0 L756.1,765.5 L747.1,766.7 L738.1,767.6 L729.1,768.1 L720.0,768.4 L710.8,768.2 L701.7,767.8 L692.5,767.1 L683.4,766.0 L674.2,764.6 L665.1,762.9 L656.0,760.8 L647.0,758.4Z" fill="none" stroke="#ffff00" stroke-width="2.2" stroke-linejoin="round"/>
<path d="M692.9,529.3 L695.0,529.9 L697.2,530.4 L699.4,530.8 L701.6,531.1 L703.7,531.4 L705.9,531.6 L708.1,531.7 L710.3,531.7 L712.5,531.7 L714.6,531.5 L716.8,531.3 L718.9,531.0 L721.0,530.7 L723.1,530.2 L725.2,529.7 L727.3,529.1 L801.9,752.2 L793.3,754.7 L784.5,756.8 L775.7,758.7 L766.9,760.2 L757.9,761.4 L748.9,762.2 L739.8,762.8 L730.7,763.0 L721.6,762.9 L712.5,762.5 L703.3,761.7 L694.2,760.6 L685.0,759.2 L675.9,757.5 L666.8,755.4 L657.8,753.1Z" fill="none" stroke="#ffff00" stroke-width="2.2" stroke-linejoin="round"/>
<path d="M682.1,534.7 L692.9,529.3" stroke="#ffff00" stroke-width="2"/>
<path d="M716.5,534.5 L727.3,529.1" stroke="#ffff00" stroke-width="2"/>
<path d="M647.0,758.4 L657.8,753.1" stroke="#ffff00" stroke-width="2"/>
<path d="M791.1,757.6 L801.9,752.2" stroke="#ffff00" stroke-width="2"/>
<path d="M727.0,530.1 L728.9,529.0 L730.7,527.9 L732.5,526.7 L734.2,525.5 L735.9,524.2 L737.6,522.8 L739.2,521.3 L740.7,519.8 L742.2,518.3 L743.7,516.6 L745.1,515.0 L746.4,513.2 L747.7,511.4 L749.0,509.6 L750.1,507.7 L751.2,505.8 L936.6,637.4 L931.9,645.5 L927.0,653.4 L921.9,661.0 L916.5,668.5 L910.9,675.8 L905.0,682.8 L898.9,689.6 L892.6,696.2 L886.1,702.5 L879.4,708.5 L872.5,714.3 L865.3,719.8 L858.0,725.1 L850.6,730.1 L842.9,734.8 L835.1,739.2Z" fill="none" stroke="#ffff00" stroke-width="2.2" stroke-linejoin="round"/>
<path d="M737.8,524.7 L739.7,523.7 L741.5,522.6 L743.3,521.4 L745.0,520.1 L746.7,518.8 L748.4,517.4 L750.0,516.0 L751.5,514.5 L753.0,512.9 L754.5,511.3 L755.9,509.6 L757.2,507.9 L758.5,506.1 L759.7,504.2 L760.9,502.4 L762.0,500.4 L947.4,632.0 L942.7,640.1 L937.8,648.0 L932.7,655.7 L927.3,663.2 L921.7,670.4 L915.8,677.4 L909.7,684.2 L903.4,690.8 L896.9,697.1 L890.2,703.2 L883.3,709.0 L876.1,714.5 L868.8,719.7 L861.3,724.7 L853.7,729.4 L845.9,733.8Z" fill="none" stroke="#ffff00" stroke-width="2.2" stroke-linejoin="round"/>
<path d="M727.0,530.1 L737.8,524.7" stroke="#ffff00" stroke-width="2"/>
<path d="M751.2,505.8 L762.0,500.4" stroke="#ffff00" stroke-width="2"/>
<path d="M835.1,739.2 L845.9,733.8" stroke="#ffff00" stroke-width="2"/>
<path d="M936.6,637.4 L947.4,632.0" stroke="#ffff00" stroke-width="2"/>
<path d="M756.1,494.8 L756.8,492.6 L757.4,490.4 L757.9,488.2 L758.4,485.9 L758.8,483.7 L759.2,481.4 L759.5,479.0 L759.7,476.7 L759.8,474.4 L759.9,472.0 L759.9,469.6 L759.8,467.3 L759.6,464.9 L759.4,462.5 L759.1,460.2 L758.8,457.8 L968.1,436.3 L969.6,446.2 L970.9,456.2 L971.8,466.1 L972.4,476.1 L972.8,486.0 L972.8,495.9 L972.5,505.8 L972.0,515.6 L971.1,525.4 L969.9,535.1 L968.5,544.7 L966.7,554.2 L964.7,563.7 L962.3,573.0 L959.7,582.3 L956.8,591.4Z" fill="none" stroke="#ffff00" stroke-width="2.2" stroke-linejoin="round"/>
<path d="M766.8,489.4 L767.5,487.3 L768.2,485.1 L768.7,482.8 L769.2,480.6 L769.6,478.3 L770.0,476.0 L770.3,473.7 L770.5,471.4 L770.6,469.0 L770.7,466.6 L770.7,464.3 L770.6,461.9 L770.4,459.5 L770.2,457.2 L769.9,454.8 L769.6,452.4 L978.9,431.0 L980.4,440.9 L981.7,450.8 L982.6,460.8 L983.2,470.7 L983.5,480.6 L983.6,490.5 L983.3,500.4 L982.7,510.2 L981.9,520.0 L980.7,529.7 L979.2,539.3 L977.5,548.9 L975.4,558.3 L973.1,567.7 L970.5,576.9 L967.6,586.0Z" fill="none" stroke="#ffff00" stroke-width="2.2" stroke-linejoin="round"/>
<path d="M756.1,494.8 L766.8,489.4" stroke="#ffff00" stroke-width="2"/>
<path d="M758.8,457.8 L769.6,452.4" stroke="#ffff00" stroke-width="2"/>
<path d="M956.8,591.4 L967.6,586.0" stroke="#ffff00" stroke-width="2"/>
<path d="M968.1,436.3 L978.9,431.0" stroke="#ffff00" stroke-width="2"/>
<path d="M755.7,445.3 L754.9,443.1 L754.0,440.8 L753.1,438.6 L752.1,436.4 L751.0,434.2 L749.9,432.1 L748.7,430.0 L747.5,427.9 L746.2,425.9 L744.8,423.9 L743.4,421.9 L741.9,420.0 L740.4,418.2 L738.9,416.4 L737.2,414.6 L735.6,412.9 L871.0,248.5 L877.9,255.6 L884.7,262.9 L891.3,270.4 L897.6,278.2 L903.8,286.1 L909.7,294.3 L915.3,302.6 L920.8,311.1 L926.0,319.8 L930.9,328.6 L935.6,337.6 L940.0,346.7 L944.2,355.9 L948.1,365.2 L951.7,374.7 L955.1,384.2Z" fill="none" stroke="#ffff00" stroke-width="2.2" stroke-linejoin="round"/>
<path d="M766.4,440.0 L765.6,437.7 L764.8,435.5 L763.8,433.2 L762.8,431.0 L761.8,428.8 L760.7,426.7 L759.5,424.6 L758.3,422.5 L757.0,420.5 L755.6,418.5 L754.2,416.6 L752.7,414.7 L751.2,412.8 L749.6,411.0 L748.0,409.3 L746.4,407.6 L881.8,243.1 L888.7,250.2 L895.5,257.5 L902.1,265.1 L908.4,272.8 L914.6,280.8 L920.5,288.9 L926.1,297.3 L931.6,305.8 L936.8,314.4 L941.7,323.2 L946.4,332.2 L950.8,341.3 L955.0,350.5 L958.9,359.9 L962.5,369.3 L965.9,378.9Z" fill="none" stroke="#ffff00" stroke-width="2.2" stroke-linejoin="round"/>
<path d="M755.7,445.3 L766.4,440.0" stroke="#ffff00" stroke-width="2"/>
<path d="M735.6,412.9 L746.4,407.6" stroke="#ffff00" stroke-width="2"/>
<path d="M955.1,384.2 L965.9,378.9" stroke="#ffff00" stroke-width="2"/>
<path d="M871.0,248.5 L881.8,243.1" stroke="#ffff00" stroke-width="2"/>
<clipPath id="hubclip"><path d="M645.6,431.2 L647.3,429.0 L649.0,427.0 L650.8,425.0 L652.7,423.2 L654.7,421.5 L656.9,419.9 L659.1,418.5 L661.3,417.2 L663.7,416.0 L666.1,415.0 L668.5,414.1 L671.1,413.3 L673.6,412.7 L676.2,412.3 L678.8,412.0 L681.5,411.8 L684.2,411.8 L686.8,412.0 L689.5,412.3 L692.2,412.8 L694.9,413.4 L697.5,414.2 L700.1,415.1 L702.7,416.1 L705.2,417.3 L707.7,418.6 L710.1,420.1 L712.5,421.7 L714.8,423.4 L717.0,425.2 L719.1,427.2 L721.2,429.3 L723.2,431.4 L725.0,433.7 L726.8,436.1 L728.4,438.5 L730.0,441.0 L731.4,443.6 L732.7,446.3 L733.9,449.0 L734.9,451.8 L735.8,454.6 L736.6,457.4 L737.3,460.3 L737.8,463.2 L738.1,466.1 L738.4,469.0 L738.5,471.9 L738.4,474.8 L738.2,477.7 L737.9,480.5 L737.4,483.3 L736.8,486.1 L736.1,488.8 L735.2,491.5 L734.2,494.1 L733.1,496.6 L731.8,499.0 L730.5,501.4 L729.0,503.6 L727.3,505.8 L725.6,507.8 L723.8,509.8 L721.9,511.6 L719.9,513.3 L717.7,514.9 L715.5,516.3 L713.3,517.6 L710.9,518.8 L708.5,519.8 L706.1,520.7 L703.5,521.5 L701.0,522.1 L698.4,522.5 L695.8,522.8 L693.1,523.0 L690.4,523.0 L687.8,522.8 L685.1,522.5 L682.4,522.0 L679.7,521.4 L677.1,520.6 L674.5,519.7 L663.9,515.5 L661.9,514.6 L659.9,513.7 L657.9,512.6 L656.0,511.5 L654.1,510.2 L652.3,508.9 L650.5,507.4 L648.8,505.9 L647.2,504.2 L645.7,502.5 L644.2,500.7 L642.8,498.8 L641.5,496.9 L640.3,494.9 L639.1,492.8 L638.1,490.7 L637.2,488.6 L636.3,486.4 L635.6,484.1 L635.0,481.9 L634.5,479.6 L634.1,477.3 L633.8,475.0 L633.6,472.7 L633.5,470.4 L633.5,468.1 L633.7,465.8 L634.0,463.5 L634.3,461.3 L634.8,459.1 L635.4,457.0 L638.5,446.0 L639.4,443.3 L640.4,440.7 L641.5,438.2 L642.8,435.8 L644.1,433.4Z"/></clipPath>
<filter id="hb" x="-20%" y="-20%" width="140%" height="140%"><feGaussianBlur stdDeviation="1.6"/></filter>
<path d="M645.6,431.2 L647.3,429.0 L649.0,427.0 L650.8,425.0 L652.7,423.2 L654.7,421.5 L656.9,419.9 L659.1,418.5 L661.3,417.2 L663.7,416.0 L666.1,415.0 L668.5,414.1 L671.1,413.3 L673.6,412.7 L676.2,412.3 L678.8,412.0 L681.5,411.8 L684.2,411.8 L686.8,412.0 L689.5,412.3 L692.2,412.8 L694.9,413.4 L697.5,414.2 L700.1,415.1 L702.7,416.1 L705.2,417.3 L707.7,418.6 L710.1,420.1 L712.5,421.7 L714.8,423.4 L717.0,425.2 L719.1,427.2 L721.2,429.3 L723.2,431.4 L725.0,433.7 L726.8,436.1 L728.4,438.5 L730.0,441.0 L731.4,443.6 L732.7,446.3 L733.9,449.0 L734.9,451.8 L735.8,454.6 L736.6,457.4 L737.3,460.3 L737.8,463.2 L738.1,466.1 L738.4,469.0 L738.5,471.9 L738.4,474.8 L738.2,477.7 L737.9,480.5 L737.4,483.3 L736.8,486.1 L736.1,488.8 L735.2,491.5 L734.2,494.1 L733.1,496.6 L731.8,499.0 L730.5,501.4 L729.0,503.6 L727.3,505.8 L725.6,507.8 L723.8,509.8 L721.9,511.6 L719.9,513.3 L717.7,514.9 L715.5,516.3 L713.3,517.6 L710.9,518.8 L708.5,519.8 L706.1,520.7 L703.5,521.5 L701.0,522.1 L698.4,522.5 L695.8,522.8 L693.1,523.0 L690.4,523.0 L687.8,522.8 L685.1,522.5 L682.4,522.0 L679.7,521.4 L677.1,520.6 L674.5,519.7 L663.9,515.5 L661.9,514.6 L659.9,513.7 L657.9,512.6 L656.0,511.5 L654.1,510.2 L652.3,508.9 L650.5,507.4 L648.8,505.9 L647.2,504.2 L645.7,502.5 L644.2,500.7 L642.8,498.8 L641.5,496.9 L640.3,494.9 L639.1,492.8 L638.1,490.7 L637.2,488.6 L636.3,486.4 L635.6,484.1 L635.0,481.9 L634.5,479.6 L634.1,477.3 L633.8,475.0 L633.6,472.7 L633.5,470.4 L633.5,468.1 L633.7,465.8 L634.0,463.5 L634.3,461.3 L634.8,459.1 L635.4,457.0 L638.5,446.0 L639.4,443.3 L640.4,440.7 L641.5,438.2 L642.8,435.8 L644.1,433.4Z" fill="#8b8e9c"/>
<g clip-path="url(#hubclip)"><g filter="url(#hb)">
<path d="M674.1,474.0 L660.2,552.7 L678.5,553.8 L696.5,550.8 L713.3,543.7 L728.1,532.9 L740.1,519.1 L748.7,503.0 L753.3,485.3 L753.8,467.0Z" fill="#8f92a0"/>
<path d="M674.1,474.0 L714.1,543.2 L720.0,539.5 L725.5,535.2 L730.7,530.5 L735.4,525.4 L739.6,519.8 L743.4,514.0 L746.6,507.8 L749.3,501.3Z" fill="#9a9dab"/>
<path d="M674.1,474.0 L754.0,469.8 L753.7,466.5 L753.4,463.2 L752.9,459.9 L752.2,456.6 L751.4,453.4 L750.5,450.2 L749.5,447.1 L748.3,444.0Z" fill="#c6c8d4"/>
<path d="M674.1,474.0 L748.3,444.0 L746.9,440.8 L745.4,437.6 L743.7,434.6 L741.9,431.6 L740.0,428.6 L738.0,425.8 L735.8,423.1 L733.5,420.4Z" fill="#f4f5fa"/>
<path d="M674.1,474.0 L733.5,420.4 L729.9,416.7 L726.1,413.1 L722.0,409.9 L717.7,406.9 L713.2,404.2 L708.5,401.8 L703.7,399.7 L698.8,397.9Z" fill="#9699a7"/>
<path d="M674.1,474.0 L698.8,397.9 L696.5,397.2 L694.1,396.5 L691.8,395.9 L689.4,395.4 L687.0,395.0 L684.5,394.6 L682.1,394.4 L679.7,394.2Z" fill="#f0f1f7"/>
<path d="M674.1,474.0 L679.7,394.2 L677.2,394.0 L674.8,394.0 L672.4,394.0 L669.9,394.1 L667.5,394.2 L665.0,394.5 L662.6,394.8 L660.2,395.2Z" fill="#c9cbd6"/>
<path d="M674.1,474.0 L660.2,395.2 L653.4,396.7 L646.7,398.8 L640.3,401.5 L634.1,404.7 L628.2,408.4 L622.7,412.7 L617.5,417.4 L612.8,422.5Z" fill="#b4b6c3"/>
<path d="M674.1,474.0 L612.8,422.5 L606.6,431.0 L601.6,440.2 L597.8,449.9 L595.3,460.1 L594.2,470.5 L594.4,480.9 L596.0,491.3 L598.9,501.3Z" fill="#a2a5b2"/>
</g></g>
<path d="M645.6,431.2 L647.3,429.0 L649.0,427.0 L650.8,425.0 L652.7,423.2 L654.7,421.5 L656.9,419.9 L659.1,418.5 L661.3,417.2 L663.7,416.0 L666.1,415.0 L668.5,414.1 L671.1,413.3 L673.6,412.7 L676.2,412.3 L678.8,412.0 L681.5,411.8 L684.2,411.8 L686.8,412.0 L689.5,412.3 L692.2,412.8 L694.9,413.4 L697.5,414.2 L700.1,415.1 L702.7,416.1 L705.2,417.3 L707.7,418.6 L710.1,420.1 L712.5,421.7 L714.8,423.4 L717.0,425.2 L719.1,427.2 L721.2,429.3 L723.2,431.4 L725.0,433.7 L726.8,436.1 L728.4,438.5 L730.0,441.0 L731.4,443.6 L732.7,446.3 L733.9,449.0 L734.9,451.8 L735.8,454.6 L736.6,457.4 L737.3,460.3 L737.8,463.2 L738.1,466.1 L738.4,469.0 L738.5,471.9 L738.4,474.8 L738.2,477.7 L737.9,480.5 L737.4,483.3 L736.8,486.1 L736.1,488.8 L735.2,491.5 L734.2,494.1 L733.1,496.6 L731.8,499.0 L730.5,501.4 L729.0,503.6 L727.3,505.8 L725.6,507.8 L723.8,509.8 L721.9,511.6 L719.9,513.3 L717.7,514.9 L715.5,516.3 L713.3,517.6 L710.9,518.8 L708.5,519.8 L706.1,520.7 L703.5,521.5 L701.0,522.1 L698.4,522.5 L695.8,522.8 L693.1,523.0 L690.4,523.0 L687.8,522.8 L685.1,522.5 L682.4,522.0 L679.7,521.4 L677.1,520.6 L674.5,519.7 L663.9,515.5 L661.9,514.6 L659.9,513.7 L657.9,512.6 L656.0,511.5 L654.1,510.2 L652.3,508.9 L650.5,507.4 L648.8,505.9 L647.2,504.2 L645.7,502.5 L644.2,500.7 L642.8,498.8 L641.5,496.9 L640.3,494.9 L639.1,492.8 L638.1,490.7 L637.2,488.6 L636.3,486.4 L635.6,484.1 L635.0,481.9 L634.5,479.6 L634.1,477.3 L633.8,475.0 L633.6,472.7 L633.5,470.4 L633.5,468.1 L633.7,465.8 L634.0,463.5 L634.3,461.3 L634.8,459.1 L635.4,457.0 L638.5,446.0 L639.4,443.3 L640.4,440.7 L641.5,438.2 L642.8,435.8 L644.1,433.4Z" fill="none" stroke="#000" stroke-width="1.2"/>
<path d="M714.7,477.6 L714.6,475.2 L714.4,472.9 L714.1,470.6 L713.7,468.3 L713.2,466.1 L712.6,463.8 L711.9,461.6 L711.0,459.4 L710.1,457.2 L709.1,455.1 L707.9,453.0 L706.7,451.0 L705.4,449.1 L704.0,447.2 L702.5,445.4 L701.0,443.7 L699.4,442.1 L697.7,440.5 L695.9,439.1 L694.1,437.7 L692.2,436.4 L690.3,435.3 L688.3,434.2 L686.3,433.3 L684.3,432.4 L682.2,431.7 L680.1,431.1 L678.0,430.6 L675.9,430.3 L673.7,430.0 L671.6,429.9 L669.5,429.9 L667.4,430.0 L665.3,430.2 L663.2,430.6 L661.2,431.1 L659.2,431.6 L657.3,432.4 L655.3,433.2 L653.5,434.1 L651.7,435.1 L649.9,436.3 L648.3,437.5 L646.7,438.9 L645.1,440.3 L643.7,441.9 L642.3,443.5 L641.0,445.2 L639.9,447.0 L638.8,448.9 L637.8,450.8 L636.9,452.8 L636.1,454.9 L635.4,457.0 L634.8,459.1 L634.3,461.3 L634.0,463.5 L633.7,465.8 L633.5,468.1 L633.5,470.4 L633.6,472.7 L633.8,475.0 L634.1,477.3 L634.5,479.6 L635.0,481.9 L635.6,484.1 L636.3,486.4 L637.2,488.6 L638.1,490.7 L639.1,492.8 L640.3,494.9 L641.5,496.9 L642.8,498.8 L644.2,500.7 L645.7,502.5 L647.2,504.2 L648.8,505.9 L650.5,507.4 L652.3,508.9 L654.1,510.2 L656.0,511.5 L657.9,512.6 L659.9,513.7 L661.9,514.6 L663.9,515.5 L666.0,516.2 L668.1,516.8 L670.2,517.3 L672.3,517.7 L674.5,517.9 L676.6,518.0 L678.7,518.0 L680.8,517.9 L682.9,517.7 L685.0,517.3 L687.0,516.9 L689.0,516.3 L690.9,515.6 L692.8,514.7 L694.7,513.8 L696.5,512.8 L698.2,511.6 L699.9,510.4 L701.5,509.0 L703.1,507.6 L704.5,506.0 L705.9,504.4 L707.1,502.7 L708.3,500.9 L709.4,499.0 L710.4,497.1 L711.3,495.1 L712.1,493.1 L712.8,491.0 L713.4,488.8 L713.9,486.6 L714.2,484.4 L714.5,482.1 L714.7,479.8 L714.7,477.6Z" fill="#5e616c" stroke="#000" stroke-width="1.3"/>
<path d="M326.3,197 L380.5,441.5" stroke="#000" stroke-width="1" fill="none"/>
<g clip-path="url(#faceclip)"><path d="M326.3,197 L380.5,441.5" stroke="#fff" stroke-width="1.1" fill="none"/></g>
<circle cx="380.6" cy="442" r="2.3" fill="#d8d8d8" stroke="#555" stroke-width="0.8"/>
<rect x="259.5" y="122.5" width="132" height="75" fill="#f5f5f5" stroke="#2a2a2a" stroke-width="1"/>
<rect x="319.5" y="147.5" width="72" height="50" fill="#fff" stroke="#2a2a2a" stroke-width="1"/>
<text x="326.5" y="139" text-anchor="middle" font-size="12" fill="#111" font-family="Liberation Sans, sans-serif">Direction 1</text>
<text x="266" y="164" font-size="12" fill="#111" font-family="Liberation Sans, sans-serif">Spacing:</text>
<text x="266" y="189" font-size="12" fill="#111" font-family="Liberation Sans, sans-serif">Instances:</text>
<text x="323" y="164" font-size="12" fill="#111" font-family="Liberation Sans, sans-serif">360deg</text>
<text x="323" y="189" font-size="12" fill="#111" font-family="Liberation Sans, sans-serif">9</text>
<rect x="374.5" y="152.5" width="13" height="8" fill="#e6e6e6" stroke="#b0b0b0"/>
<rect x="374.5" y="160.5" width="13" height="8" fill="#e6e6e6" stroke="#b0b0b0"/>
<path d="M377.7,158.7 l3.3,-3.8 l3.3,3.8z M377.7,162.7 l3.3,3.8 l3.3,-3.8z" fill="#222"/>
<rect x="374.5" y="177.5" width="13" height="8" fill="#e6e6e6" stroke="#b0b0b0"/>
<rect x="374.5" y="185.5" width="13" height="8" fill="#e6e6e6" stroke="#b0b0b0"/>
<path d="M377.7,183.7 l3.3,-3.8 l3.3,3.8z M377.7,187.7 l3.3,3.8 l3.3,-3.8z" fill="#222"/>
<circle cx="326.3" cy="196.8" r="2.6" fill="#fff" stroke="#222" stroke-width="1"/>
<path d="M377,210 l5,-5 l5,5" fill="none" stroke="#6a6a6a" stroke-width="1.8"/>
<path d="M815.7,242.1 L810.9,238.8 L806.1,235.6 L801.2,232.5 L796.3,229.5 L791.3,226.6 L786.3,223.9 L781.3,221.3 L776.2,218.7 L771.0,216.3 L765.9,214.0 L760.6,211.9 L755.4,209.8 L750.1,207.9 L744.8,206.1 L739.5,204.4 L734.1,202.9 L728.8,201.4 L723.4,200.1 L718.0,198.9 L712.6,197.9 L707.2,197.0 L701.7,196.1 L696.3,195.5 L690.9,194.9" fill="none" stroke="#000" stroke-width="1"/>
<path d="M690.9,194.9 L702.1,193.6 L701.5,198.7Z" fill="#555" stroke="#000" stroke-width="0.8"/>
<path d="M815.7,242.1 L805.1,238.0 L808.0,233.7Z" fill="#555" stroke="#000" stroke-width="0.8"/>
<text transform="translate(767,210) rotate(16)" font-size="17.5" fill="#000" font-family="Liberation Sans, sans-serif">30°</text>
<path d="M833,212.2 L863.5,216" stroke="#000" stroke-width="1" fill="none"/>
<path d="M729.3,403.6 L864.5,414.6" stroke="#000" stroke-width="1" fill="none"/>
<path d="M860.2,217 L862.3,413" stroke="#000" stroke-width="1" fill="none"/>
<path d="M860.2,216.5 L862.7,228.5 L857.9,228.5Z" fill="#555" stroke="#000" stroke-width="0.8"/>
<path d="M862.3,413.5 L859.8,401.5 L864.6,401.5Z" fill="#555" stroke="#000" stroke-width="0.8"/>
<text transform="translate(865,353.5) rotate(90)" font-size="16.5" letter-spacing="0.5" fill="#000" font-family="Liberation Sans, sans-serif">270.00</text>
<path d="M603.4,310.9 L694,465.1" stroke="#000" stroke-width="1" fill="none"/>
<path d="M654.6,397.5 L646.9,389.3 L651.2,386.7Z" fill="#333" stroke="#000" stroke-width="0.8"/>
<text transform="translate(609,317.5) rotate(59.6)" font-size="16.5" fill="#000" font-family="Liberation Sans, sans-serif">R100.00</text>
<path d="M607.5,345.5 l5,5 M612.5,345.5 l-5,5" stroke="#f58220" stroke-width="1"/>
<circle cx="681.5" cy="469.5" r="4.6" fill="none" stroke="#c9c9c9" stroke-width="1"/><path d="M678,471 l6,-3 M682,466 l3,2" stroke="#d8d8d8" stroke-width="1" fill="none"/>
<rect x="538.5" y="381.5" width="79" height="17.5" fill="#3a3a3a" opacity="0.35"/>
<rect x="536.5" y="379.5" width="79" height="17.5" fill="#fbfbf6" stroke="#8a8a8a" stroke-width="1"/>
<text x="540" y="392" font-size="12" fill="#5a5a5a" font-family="Liberation Sans, sans-serif">Cut-Extrude4</text>
<path d="M233.5,41 l4.5,4 l-4.5,4z" fill="#222"/>
<g transform="translate(238.6,31.4)"><g stroke-linejoin="round"><path d="M12.3,9.7 L15.5,7.9 L15.5,5.7 L20.2,3.8 L24.5,5.5 L24.5,10.4 L28.9,12.5 L28.9,18.7 L23.5,21.4 L12.9,14.1Z" fill="#f4c826" stroke="#3a2c05" stroke-width="1.3"/><path d="M15.5,5.7 L20.2,3.8 L24.5,5.5 L19.5,7.6Z" fill="#fde77a"/><path d="M19.5,7.6 L24.5,5.5 L24.5,10.4 L19.5,12.6Z" fill="#f9d848"/><path d="M24.5,10.4 L28.9,12.5 L23.8,14.4 L19.5,12.6Z" fill="#fde56e"/><path d="M23.8,14.4 L28.9,12.5 L28.9,18.7 L23.5,21.4Z" fill="#f8d440"/><path d="M12.3,9.7 L15.5,7.9 L19.5,10 L19.5,12.6 L23.8,14.4 L23.5,21.4 L12.9,14.1Z" fill="#f0be1c"/><path d="M15.5,5.7 L19.5,7.6 L24.5,5.5 M19.5,7.6 L19.5,12.6 L23.8,14.4 L28.9,12.5 M23.8,14.4 L23.5,21.4 M19.5,12.6 L24.5,10.4 M15.5,7.9 L15.5,5.7" fill="none" stroke="#7a5c08" stroke-width="0.8"/><path d="M12.3,9.7 L15.5,7.9 L15.5,5.7 L20.2,3.8 L24.5,5.5 L24.5,10.4 L28.9,12.5 L28.9,18.7 L23.5,21.4 L12.9,14.1Z" fill="none" stroke="#3a2c05" stroke-width="1.2"/></g></g>
<text x="273" y="50" font-size="12" fill="#111" xml:space="preserve" font-family="Liberation Sans, sans-serif">Part3  (Default&lt;&lt;Default&gt;...</text>
<g><path d="M268.2,838.5 L258.5,843.8" stroke="#1414c8" stroke-width="3.4"/><circle cx="258.6" cy="843.6" r="3.3" fill="#1212b8"/><path d="M268.2,838.5 L268.1,817" stroke="#14c814" stroke-width="3.2"/><path d="M267.9,809.5 l-4.2,9.5 h8.4z" fill="#10b810"/><path d="M268.2,839.6 L287,840.6" stroke="#c81414" stroke-width="3.2"/><path d="M295.3,841.3 l-9.5,-4.2 l-0.4,8.4z" fill="#b81010"/><text x="265" y="803" font-size="8" font-weight="bold" fill="#3ad06a" font-family="Liberation Sans, sans-serif">Y</text><text x="298" y="842" font-size="8" font-weight="bold" fill="#f0606a" font-family="Liberation Sans, sans-serif">X</text><text x="250.5" y="846" font-size="8" font-weight="bold" fill="#3030d0" font-family="Liberation Sans, sans-serif">Z</text></g>
<g><circle cx="920.4" cy="20.4" r="6" fill="#eef1f5" stroke="#7a7f88" stroke-width="1.2"/><path d="M916,25 L909.8,31" stroke="#5b9bc8" stroke-width="3.2" stroke-linecap="round"/><path d="M916,25 L909.8,31" stroke="#8fc0e0" stroke-width="1.2" stroke-linecap="round"/><path d="M920.4,16.2 l-1.5,1.8 h3z M920.4,24.6 l-1.5,-1.8 h3z M916.2,20.4 l1.8,-1.5 v3z M924.6,20.4 l-1.8,-1.5 v3z" fill="#222"/><rect x="940.5" y="14.5" width="12.5" height="12.5" fill="none" stroke="#333" stroke-width="1.1" stroke-dasharray="3 2"/><circle cx="944.6" cy="21.8" r="6.2" fill="#e9edf3" stroke="#7a7f88" stroke-width="1.2"/><path d="M940,26.5 L934.8,31.5" stroke="#5b9bc8" stroke-width="3.2" stroke-linecap="round"/><path d="M940,26.5 L934.8,31.5" stroke="#8fc0e0" stroke-width="1.2" stroke-linecap="round"/><path d="M961.5,25 L975.5,14.5 L978.5,18 L966,30.5 A3,3.5 -40 0 1 961.5,25Z" fill="#eef0f4" stroke="#7a7f88" stroke-width="1.1" stroke-linejoin="round"/><path d="M971,18 L974.5,22.5 M968,20.3 L971.8,25" stroke="#9aa0aa" stroke-width="1"/><path d="M979,25.2 h-5 v-2.3 l-4.5,3.6 l4.5,3.6 v-2.3 h5z" fill="#4a90bf"/><path d="M988,17.5 a4.5,2.5 0 0 1 8,0 l0,1.5 a3,1.6 0 0 1 4,0 v-1.5 a2.5,2 0 0 1 4.5,1 v9 a3,2 0 0 1 -4.5,1.5 a3,1.6 0 0 0 -4,0 a5,3 0 0 1 -8,-1Z" fill="#ececec" stroke="#dcdcdc" stroke-width="1"/><path d="M1013.5,19.5 L1018.5,14 L1031,14 L1031,26.5 L1026,31.5" fill="#fff" stroke="#444" stroke-width="1.1" stroke-linejoin="round"/><path d="M1026,19.5 L1031,14" stroke="#444" stroke-width="1"/><rect x="1013.5" y="19.5" width="12.5" height="12" fill="#7fc0e4" stroke="#2f6f95" stroke-width="1.2"/><path d="M1021,15 v3 M1019.6,16.8 l1.4,1.6 l1.4,-1.6 M1030,22.8 h-3 M1028.4,21.4 l-1.6,1.4 l1.6,1.4" stroke="#222" stroke-width="1" fill="none"/><path d="M1039,21.8 h5.2 l-2.6,3.4z" fill="#8a8a8a"/><path d="M1054.5,16.5 L1063,13.5 L1070.5,16.5 L1070.5,27.5 L1060,31.5 L1054.5,27Z" fill="#fff" stroke="#5a6470" stroke-width="1.1" stroke-linejoin="round"/><path d="M1054.5,16.5 L1060,19.5 L1060,31.5 L1054.5,27Z" fill="#5aa7d6"/><path d="M1060,19.5 L1065,17.8 L1065,29.6 L1060,31.5Z" fill="#9fd0ec"/><path d="M1054.5,16.5 L1063,13.5 L1070.5,16.5 L1060,19.5Z" fill="#d4e9f5"/><path d="M1054.5,16.5 L1060,19.5 L1070.5,16.5 M1060,19.5 L1060,31.5" fill="none" stroke="#44607a" stroke-width="1"/><path d="M1079,21.8 h5.2 l-2.6,3.4z" fill="#8a8a8a"/><path d="M1093.5,22.5 Q1101,14.5 1110,20 L1110,26 Q1101,30.5 1093.5,22.5Z" fill="#f2f2f2" stroke="#c8c8c8" stroke-width="1"/><circle cx="1103.5" cy="21.5" r="4.2" fill="#777"/><path d="M1102.2,16 v14" stroke="#555" stroke-width="1"/></g>
</g>
<path d="M179.5,138.5 L179.5,155 L183.3,151.6 L186,157.2 L188.6,156 L186,150.6 L190.8,150.2Z" fill="#fff" stroke="#000" stroke-width="1.1" stroke-linejoin="round"/>
</svg>
</body></html>
